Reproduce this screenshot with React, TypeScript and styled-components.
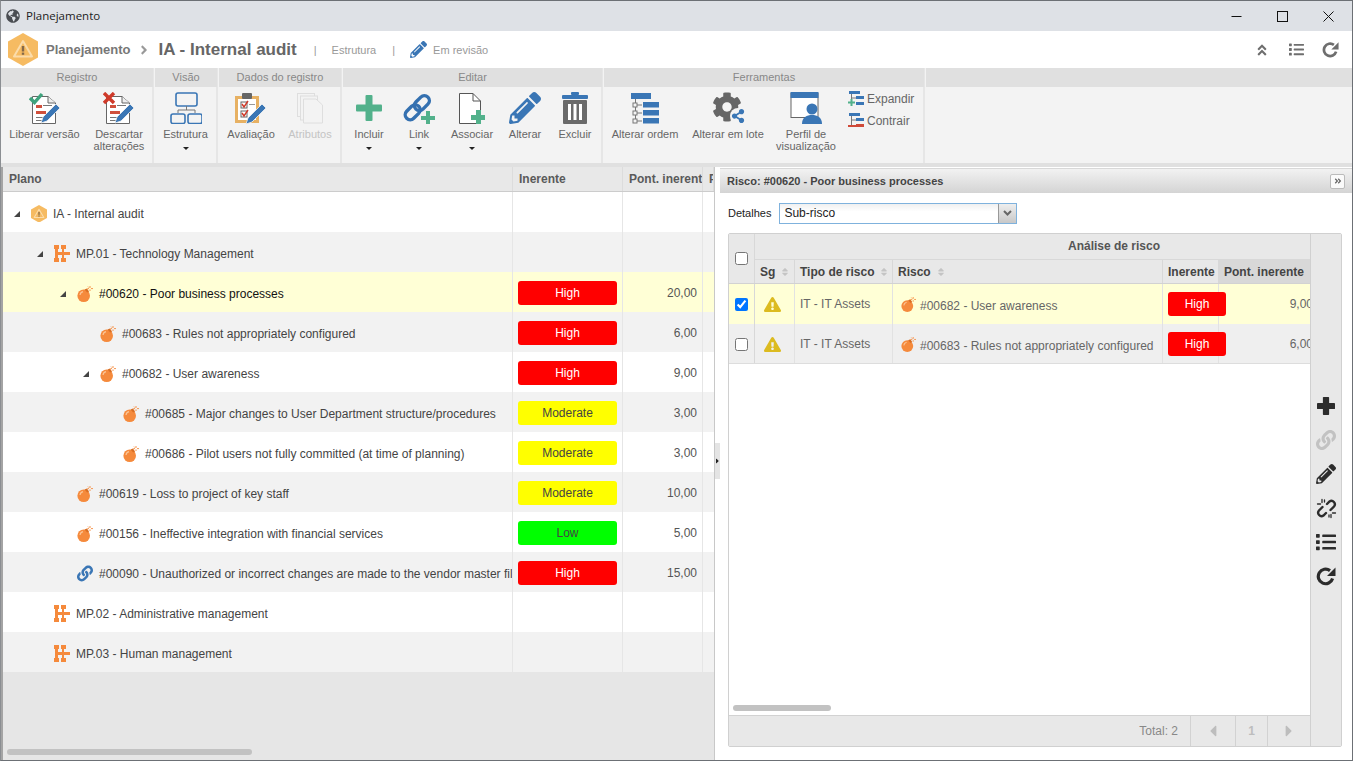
import React, { FC, ReactNode } from "react";
import styled, { createGlobalStyle } from "styled-components";
import {
  FaAngleDoubleUp,
  FaAngleDoubleRight,
  FaAngleRight,
  FaCaretLeft,
  FaCaretRight,
  FaCog,
  FaExclamationTriangle,
  FaGlobeAmericas,
  FaLink,
  FaList,
  FaPencilAlt,
  FaShareAlt,
  FaSort,
} from "react-icons/fa";

const GlobalStyle = createGlobalStyle`
  html, body { margin: 0; padding: 0; background: #fff; }
  body { font-family: "Liberation Sans", Arial, sans-serif; overflow: hidden; }
`;

const Frame = styled.div`
  width: 1351px;
  height: 759px;
  border-top: 1px solid #6c7075;
  border-left: 1px solid #8b8e92;
  border-right: 1px solid #6c7075;
  border-bottom: 1px solid #6c7075;
  display: flex;
  flex-direction: column;
  overflow: hidden;
  background: #fff;
`;

const TitleBar = styled.div`
  height: 30px;
  flex: none;
  background: #dee1e6;
  display: flex;
  align-items: center;
  padding-left: 5px;
  color: #4a4d52;
  font-size: 14px;
`;

const TitleText = styled.span`
  font-family: "Open Sans", sans-serif;
  font-size: 11.5px;
  color: #222;
  margin: 0 0 2px 6px;
`;

const WinControls = styled.div`
  margin: 0 1px 0 auto;
  display: flex;
  height: 100%;
`;

const WinButton = styled.div`
  width: 46px;
  height: 100%;
  display: flex;
  align-items: center;
  justify-content: center;
`;

const Header = styled.div`
  height: 37px;
  flex: none;
  display: flex;
  align-items: center;
  padding-left: 7px;
  background: #fff;
`;

const Crumb = styled.span`
  font-size: 13px;
  font-weight: bold;
  color: #777;
  margin-left: 8px;
`;

const CrumbArrow = styled.span`
  color: #999;
  font-size: 14px;
  display: flex;
  margin: 0 8px 0 6px;
`;

const AuditTitle = styled.span`
  font-size: 17px;
  font-weight: bold;
  color: #666;
`;

const HeaderMeta = styled.span<{ $gap: number }>`
  font-size: 11px;
  color: #999;
  display: flex;
  margin-left: ${({ $gap }) => $gap}px;
`;

const HeaderActions = styled.div`
  margin-left: auto;
  display: flex;
  align-items: center;
  color: #6e6e6e;
  padding-right: 13px;
  gap: 20px;
`;

const RefreshSlot = styled.span`
  display: flex;
  margin-left: -2px;
`;

const Toolbar = styled.div`
  height: 95px;
  flex: none;
  display: flex;
  background: #f3f3f3;
`;

const Group = styled.div<{ $w: number }>`
  width: ${({ $w }) => $w}px;
  flex: none;
  display: flex;
  flex-direction: column;
  border-right: 2px solid #e6e6e6;
  margin-right: 1px;
`;

const RestGroup = styled.div`
  flex: 1;
  height: 19px;
  background: #e0e0e0;
`;

const GroupTitle = styled.div`
  height: 19px;
  margin-right: -1px;
  background: #e0e0e0;
  font-size: 11px;
  line-height: 19px;
  color: #888;
  text-align: center;
`;

const GroupBody = styled.div`
  flex: 1;
  display: flex;
`;

const ToolButton = styled.div<{ $w: number; $off?: boolean }>`
  width: ${({ $w }) => $w}px;
  flex: none;
  display: flex;
  flex-direction: column;
  align-items: center;
  padding-top: 5px;
  font-size: 11px;
  line-height: 12px;
  text-align: center;
  color: ${({ $off }) => ($off ? "#c4c4c4" : "#666")};
`;

const ToolIcon = styled.div`
  height: 32px;
  margin-bottom: 4px;
  display: flex;
  align-items: center;
  justify-content: center;
`;

const Caret = styled.i`
  width: 0;
  height: 0;
  margin-top: 7px;
  border-left: 3px solid transparent;
  border-right: 3px solid transparent;
  border-top: 3px solid #222;
`;

const SideTools = styled.div`
  display: flex;
  flex-direction: column;
  gap: 5px;
  padding: 3px 0 0 6px;
`;

const SideTool = styled.div`
  display: flex;
  align-items: center;
  gap: 3px;
  height: 17px;
  font-size: 12px;
  color: #666;
`;

const Strip = styled.div`
  height: 4px;
  flex: none;
  background: #e0e0e0;
`;

const Main = styled.div`
  flex: 1;
  display: flex;
  min-height: 0;
`;

const LeftPane = styled.div`
  width: 711px;
  flex: none;
  display: flex;
  flex-direction: column;
  background: #e6e6e6;
  border-left: 2px solid #a4a4a4;
`;

const TreeHead = styled.div`
  height: 24px;
  flex: none;
  display: flex;
  background: #e8e8e8;
  border-bottom: 1px solid #ccc;
`;

const HeadCell = styled.div<{ $w: number }>`
  width: ${({ $w }) => $w}px;
  flex: none;
  box-sizing: border-box;
  overflow: hidden;
  white-space: nowrap;
  padding-left: 6px;
  font-size: 12px;
  font-weight: bold;
  line-height: 24px;
  color: #5a5a5a;
  border-right: 1px solid #dcdcdc;
`;

const TreeRow = styled.div<{ $bg: string }>`
  height: 40px;
  flex: none;
  display: flex;
  background: ${({ $bg }) => $bg};
`;

const PlanCell = styled.div<{ $level: number }>`
  width: 510px;
  flex: none;
  box-sizing: border-box;
  padding: 3px 0 0 ${({ $level }) => 8 + $level * 23}px;
  display: flex;
  align-items: center;
  overflow: hidden;
  white-space: nowrap;
  border-right: 1px solid #e6e6e6;
`;

const Toggle = styled.span`
  width: 20px;
  flex: none;
  display: flex;
  padding-left: 2px;
  box-sizing: border-box;
`;

const NodeIcon = styled.span`
  width: 16px;
  flex: none;
  display: flex;
  justify-content: center;
`;

const NodeText = styled.span<{ $active?: boolean }>`
  font-size: 12px;
  margin-left: 6px;
  color: ${({ $active }) => ($active ? "#111" : "#444")};
`;

const LevelCell = styled.div`
  width: 110px;
  flex: none;
  box-sizing: border-box;
  padding: 2px 0 0 5px;
  display: flex;
  align-items: center;
  border-right: 1px solid #e6e6e6;
`;

const ScoreCell = styled.div`
  width: 80px;
  flex: none;
  box-sizing: border-box;
  padding: 1px 5px 0 0;
  text-align: right;
  font-size: 12px;
  color: #555;
  display: flex;
  align-items: center;
  justify-content: flex-end;
  border-right: 1px solid #e6e6e6;
`;

const Badge = styled.div<{ $bg: string; $fg: string; $w: number }>`
  width: ${({ $w }) => $w}px;
  height: 24px;
  flex: none;
  border-radius: 3px;
  background: ${({ $bg }) => $bg};
  color: ${({ $fg }) => $fg};
  font-size: 12px;
  line-height: 24px;
  text-align: center;
  position: relative;
  z-index: 1;
`;

const TreeEnd = styled.div`
  flex: 1;
  display: flex;
  align-items: flex-end;
  padding: 0 0 5px 4px;
`;

const ScrollThumb = styled.div<{ $w: number }>`
  width: ${({ $w }) => $w}px;
  height: 6px;
  border-radius: 3px;
  background: #c2c2c2;
`;

const Splitter = styled.div`
  width: 6px;
  flex: none;
  display: flex;
  align-items: center;
  background: #fff;
  border-left: 1px solid #c8c8c8;
  box-sizing: border-box;
  padding-bottom: 5px;
`;

const SplitHandle = styled.div`
  width: 5px;
  height: 36px;
  background: #e4e4e4;
  display: flex;
  align-items: center;
  font-size: 8px;
  color: #222;
`;

const RightPane = styled.div`
  flex: 1;
  min-width: 0;
  display: flex;
  flex-direction: column;
  padding-top: 1px;
`;

const PaneTitle = styled.div`
  height: 24px;
  flex: none;
  display: flex;
  align-items: center;
  padding: 0 7px 0 7px;
  font-size: 11px;
  font-weight: bold;
  color: #444;
  background: linear-gradient(#f2f2f2, #d4d4d4);
  border-top: 1px solid #d8d8d8;
`;

const CollapseBtn = styled.div`
  margin-left: auto;
  width: 13px;
  height: 13px;
  display: flex;
  align-items: center;
  justify-content: center;
  font-size: 8px;
  color: #666;
  background: #fafafa;
  border: 1px solid #bbb;
  border-radius: 2px;
`;

const DetailRow = styled.div`
  height: 40px;
  flex: none;
  display: flex;
  align-items: center;
  padding-left: 8px;
  font-size: 11px;
  color: #222;
`;

const SelectBox = styled.div`
  width: 238px;
  height: 21px;
  box-sizing: border-box;
  margin-left: 8px;
  border: 1px solid #7fb2dd;
  display: flex;
  align-items: center;
  padding-left: 4px;
  font-size: 12px;
  color: #222;
  background: linear-gradient(#f0f0f0, #fff 40%);
`;

const SelectArrow = styled.div`
  margin-left: auto;
  width: 17px;
  height: 100%;
  background: linear-gradient(#eee, #c8c8c8);
  border-left: 1px solid #999;
  display: flex;
  align-items: center;
  justify-content: center;
`;

const GridBox = styled.div`
  width: 614px;
  height: 514px;
  flex: none;
  margin-left: 8px;
  box-sizing: border-box;
  display: flex;
  border: 1px solid #d0d0d0;
  border-radius: 2px;
`;

const GridMain = styled.div`
  width: 581px;
  flex: none;
  display: flex;
  flex-direction: column;
  overflow: hidden;
`;

const GridHead = styled.div`
  height: 50px;
  flex: none;
  box-sizing: border-box;
  display: flex;
  background: #e8e8e8;
  border-bottom: 1px solid #d2d2d2;
`;

const CheckHead = styled.div`
  width: 26px;
  flex: none;
  box-sizing: border-box;
  display: flex;
  align-items: center;
  justify-content: center;
  border-right: 1px solid #d8d8d8;
`;

const HeadStack = styled.div`
  flex: 1;
  display: flex;
  flex-direction: column;
`;

const GroupHead = styled.div`
  height: 26px;
  flex: none;
  box-sizing: border-box;
  font-size: 12px;
  font-weight: bold;
  color: #555;
  line-height: 25px;
  text-align: center;
  padding-left: 154px;
  border-bottom: 1px solid #d8d8d8;
`;

const ColumnRow = styled.div`
  flex: 1;
  display: flex;
`;

const ColHead = styled.div<{ $w: number; $sorted?: boolean }>`
  width: ${({ $w }) => $w}px;
  flex: none;
  box-sizing: border-box;
  padding-left: 5px;
  display: flex;
  align-items: center;
  gap: 5px;
  font-size: 12px;
  font-weight: bold;
  color: #444;
  white-space: nowrap;
  background: ${({ $sorted }) => ($sorted ? "#d8d8d8" : "transparent")};
  border-right: 1px solid ${({ $sorted }) => ($sorted ? "transparent" : "#d8d8d8")};
  svg { color: #c4c4c4; font-size: 10px; }
`;

const GridRow = styled.div<{ $bg: string }>`
  height: 40px;
  flex: none;
  display: flex;
  background: ${({ $bg }) => $bg};
`;

const GridCell = styled.div<{ $w: number; $right?: boolean }>`
  width: ${({ $w }) => $w}px;
  flex: none;
  box-sizing: border-box;
  padding: ${({ $right }) => ($right ? "0 5px 0 0" : "0 0 0 5px")};
  display: flex;
  align-items: center;
  justify-content: ${({ $right }) => ($right ? "flex-end" : "flex-start")};
  font-size: 12px;
  color: #666;
  white-space: nowrap;
  border-right: 1px solid ${({ $right }) => ($right ? "transparent" : "#e2e2e2")};
`;

const TriangleSlot = styled.span`
  display: flex;
  margin-left: 4px;
  color: #dcbb20;
`;

const BombSlot = styled.span`
  display: flex;
  margin-left: 3px;
`;

const RiskLabel = styled.span`
  margin-left: 4px;
  padding-top: 4px;
`;

const RowCheck = styled.input.attrs({ type: "checkbox" })`
  width: 13px;
  height: 13px;
  margin: 0;
`;

const GridSpace = styled.div`
  flex: 1;
  display: flex;
  align-items: flex-end;
  padding: 0 0 4px 4px;
  background: #fff;
  border-top: 1px solid #ddd;
  margin-top: -1px;
  position: relative;
`;

const GridFoot = styled.div`
  height: 31px;
  flex: none;
  box-sizing: border-box;
  display: flex;
  justify-content: flex-end;
  background: #e8e8e8;
  border-top: 1px solid #d2d2d2;
`;

const FootTotal = styled.div`
  display: flex;
  align-items: center;
  padding-right: 12px;
  font-size: 12px;
  color: #888;
`;

const PageCell = styled.div<{ $w: number }>`
  width: ${({ $w }) => $w}px;
  flex: none;
  box-sizing: border-box;
  display: flex;
  align-items: center;
  justify-content: center;
  font-size: 12px;
  font-weight: bold;
  color: #bdbdbd;
  border-left: 1px solid #d2d2d2;
`;

const GridRail = styled.div`
  flex: 1;
  display: flex;
  flex-direction: column;
  align-items: center;
  padding-top: 162px;
  gap: 14px;
  font-size: 20px;
  background: #e8e8e8;
  border-left: 1px solid #d0d0d0;
  color: #2c2c2c;
`;

const RailIcon = styled.div<{ $off?: boolean }>`
  height: 20px;
  display: flex;
  align-items: center;
  color: ${({ $off }) => ($off ? "#c2c2c2" : "#2c2c2c")};
`;

const orange = "#f58a3c";
const blue = "#3a76b5";
const green = "#52b18b";

const Hexagon: FC<{ size: number }> = ({ size }) => (
  <svg width={size} height={size * 1.1} viewBox="0 0 30 33">
    <polygon points="15,0 30,8.5 30,24.5 15,33 0,24.5 0,8.5" fill="#f6bb62" />
    <path d="M15 8 L24 23.5 H6 Z" fill="none" stroke="#fbdcaa" strokeWidth="2" strokeLinejoin="round" />
    <rect x="13.8" y="13" width="2.4" height="5.5" fill="#85694a" />
    <rect x="13.8" y="19.6" width="2.4" height="2.2" fill="#85694a" />
  </svg>
);

const ProcessIcon = () => (
  <svg width="16" height="17" viewBox="0 0 16 17" fill={orange}>
    <rect x="0" y="0" width="5" height="4" />
    <rect x="0" y="13" width="5" height="4" />
    <rect x="1" y="3" width="3" height="11" />
    <rect x="7" y="0" width="5" height="4" />
    <rect x="7" y="13" width="5" height="4" />
    <rect x="8" y="3" width="2" height="11" />
    <rect x="3" y="7" width="13" height="3" />
  </svg>
);

const BombIcon: FC<{ size?: number }> = ({ size = 16 }) => (
  <svg width={size} height={size} viewBox="0 0 16 16">
    <circle cx="6.7" cy="9.7" r="6.3" fill={orange} />
    <path d="M3 9 A4 4 0 0 1 6 5.6" fill="none" stroke="#fbc596" strokeWidth="1.2" />
    <polygon points="7.5,3.4 10,2.4 12,5.4 10.2,6.4" fill="#d96f24" />
    <path d="M13 0 V2 M13 3.4 V5 M10.4 2.6 H12 M14 2.6 H16 M11 0.6 L12 1.6" stroke={orange} strokeWidth="0.9" />
  </svg>
);

const ToggleMark = () => (
  <svg width="8" height="8" viewBox="0 0 8 8">
    <polygon points="7,1 7,7 1,7" fill="#444" />
  </svg>
);

const DocEdit: FC<{ mark: "check" | "cross" }> = ({ mark }) => (
  <svg width="32" height="32" viewBox="0 0 32 32">
    <path d="M3.5 4.5 H19 L26.5 11 V31.5 H3.5 Z" fill="#fff" stroke="#666" />
    <path d="M19 4.5 V11 H26.5" fill="#eee" stroke="#666" />
    <rect x="7" y="13" width="6" height="3" fill="#d0503c" />
    <rect x="14" y="13" width="9" height="1" fill="#777" />
    <rect x="7" y="19" width="10" height="3" fill="#d0503c" />
    <rect x="7" y="25" width="10" height="1" fill="#777" />
    <rect x="7" y="28" width="8" height="1" fill="#777" />
    <path d="M12 31 L14 25 L27 12 L31 16 L18 29 Z" fill={blue} stroke="#f3f3f3" strokeWidth="0.8" />
    {mark === "check" ? (
      <path d="M1 6 L5.5 10.5 L13 2" fill="none" stroke="#3fa37d" strokeWidth="3.4" />
    ) : (
      <path d="M1 1 L11 11 M11 1 L1 11" fill="none" stroke="#cf3a2a" strokeWidth="3.4" />
    )}
  </svg>
);

const StructureIcon = () => (
  <svg width="32" height="32" viewBox="0 0 32 32" fill="none">
    <rect x="6" y="1" width="21" height="13" rx="2" stroke={blue} strokeWidth="1.6" />
    <path d="M16.5 14 V18 M8 18 H25 M8 18 V21 M25 18 V21" stroke="#777" />
    <rect x="1" y="22" width="14" height="9.5" rx="2" stroke={blue} strokeWidth="1.6" />
    <rect x="18" y="22" width="14" height="9.5" rx="2" stroke={blue} strokeWidth="1.6" />
  </svg>
);

const ClipboardIcon = () => (
  <svg width="32" height="32" viewBox="0 0 32 32">
    <rect x="0" y="4" width="24" height="27" fill="#e7b163" />
    <rect x="3" y="7" width="18" height="21" fill="#fff" />
    <rect x="7" y="1" width="10" height="6" rx="1" fill="#666" />
    <rect x="6" y="10" width="6" height="6" fill="#fff" stroke="#666" />
    <rect x="6" y="19" width="6" height="6" fill="#fff" stroke="#666" />
    <path d="M7 12 L9 15 L13 9 M7 21 L9 24 L13 18" fill="none" stroke="#cf3a2a" strokeWidth="1.5" />
    <rect x="14" y="12" width="6" height="1" fill="#999" />
    <path d="M11 32 L13 26 L27 12 L31 16 L17 30 Z" fill={blue} stroke="#f3f3f3" strokeWidth="0.8" />
  </svg>
);

const PagesIcon = () => (
  <svg width="28" height="32" viewBox="0 0 28 32" fill="#f3f3f3" stroke="#dedede">
    <rect x="1.5" y="1.5" width="17" height="23" />
    <rect x="4.5" y="4" width="17" height="24" />
    <path d="M7.5 7 H20 L26.5 13 V31 H7.5 Z" />
  </svg>
);

const SolidPlus: FC<{ size: number; color: string; bar?: number }> = ({ size, color, bar = 7 }) => (
  <svg width={size} height={size} viewBox="0 0 26 26" fill={color}>
    <rect x={13 - bar / 2} y="0" width={bar} height="26" rx="1" />
    <rect x="0" y={13 - bar / 2} width="26" height={bar} rx="1" />
  </svg>
);

const LinkAddIcon = () => (
  <svg width="32" height="32" viewBox="0 0 32 32">
    <g transform="rotate(-45 15 15)" fill="none" stroke="#3470b0" strokeWidth="3.4">
      <rect x="-1" y="10" width="17" height="10" rx="5" />
      <rect x="12" y="10" width="17" height="10" rx="5" />
    </g>
    <rect x="23" y="19" width="4" height="13" fill={green} />
    <rect x="18" y="24" width="14" height="4" fill={green} />
  </svg>
);

const AssociateIcon = () => (
  <svg width="32" height="32" viewBox="0 0 32 32">
    <path d="M3.5 1.5 H17 L24.5 9 V31.5 H3.5 Z" fill="#fff" stroke="#555" />
    <path d="M17 1.5 V9 H24.5" fill="none" stroke="#555" />
    <rect x="20" y="18" width="5" height="14" fill={green} />
    <rect x="15" y="23" width="14" height="5" fill={green} />
  </svg>
);

const TrashIcon = () => (
  <svg width="28" height="32" viewBox="0 0 28 32">
    <rect x="10" y="0" width="8" height="3" rx="1" fill={blue} />
    <rect x="1" y="3" width="26" height="4" rx="1" fill={blue} />
    <rect x="2" y="8" width="24" height="24" rx="1" fill="#6a6a6a" />
    <rect x="7" y="12" width="3" height="16" fill="#fff" />
    <rect x="12.5" y="12" width="3" height="16" fill="#fff" />
    <rect x="18" y="12" width="3" height="16" fill="#fff" />
  </svg>
);

const OrderIcon = () => (
  <svg width="30" height="32" viewBox="0 0 30 32">
    <rect x="1" y="1" width="20" height="6" fill={blue} />
    <path d="M5.5 7 V29 M5.5 13 H12 M5.5 21 H12 M5.5 29 H12" stroke="#777" fill="none" />
    <rect x="3" y="11" width="4" height="4" fill="#f3f3f3" stroke="#777" />
    <rect x="3" y="19" width="4" height="4" fill="#f3f3f3" stroke="#777" />
    <rect x="3" y="27" width="4" height="4" fill="#f3f3f3" stroke="#777" />
    <rect x="13" y="10" width="16" height="5.5" fill={blue} />
    <rect x="13" y="18" width="16" height="5.5" fill={blue} />
    <rect x="13" y="26" width="16" height="5.5" fill={blue} />
  </svg>
);

const GearWrap = styled.div`
  position: relative;
  width: 32px;
  height: 32px;
  display: flex;
`;

const ShareMark = styled.span`
  position: absolute;
  right: -2px;
  bottom: 0;
  display: flex;
  background: #f3f3f3;
  border-radius: 50%;
  padding: 1px;
`;

const BatchIcon = () => (
  <GearWrap>
    <FaCog size={30} color="#666" />
    <ShareMark>
      <FaShareAlt size={14} color={blue} />
    </ShareMark>
  </GearWrap>
);

const ProfileIcon = () => (
  <svg width="32" height="32" viewBox="0 0 32 32">
    <rect x="1" y="1.5" width="27" height="24" fill="#fff" stroke="#666" />
    <rect x="0.5" y="0" width="28" height="6" fill={blue} />
    <circle cx="22" cy="17" r="5.5" fill={blue} />
    <path d="M12 32 C12 25 17 23 22 23 C27 23 32 25 32 32 Z" fill={blue} />
  </svg>
);

const TreeToolIcon: FC<{ mode: "plus" | "minus" }> = ({ mode }) => (
  <svg width="16" height="15" viewBox="0 0 16 15">
    <rect x="1" y="0" width="11" height="3" fill={blue} />
    <path d="M3.5 3 V12 M3.5 7 H8" stroke="#777" fill="none" />
    <rect x="8" y="5" width="8" height="3" fill={blue} />
    <rect x="8" y="11" width="8" height="3" fill={mode === "plus" ? blue : "#cf4a38"} />
    {mode === "plus" ? (
      <path d="M0 11.5 H7 M3.5 8 V15" stroke={green} strokeWidth="2" />
    ) : (
      <rect x="0" y="12" width="8" height="2" fill="#cf4a38" />
    )}
  </svg>
);

const RefreshIcon: FC<{ size: number }> = ({ size }) => (
  <svg width={size} height={size} viewBox="0 0 20 20" fill="currentColor">
    <path d="M16.6 12.5 A7.3 7.3 0 1 1 14 4.6" fill="none" stroke="currentColor" strokeWidth="3.2" />
    <polygon points="19.5,1.5 19.5,10 11,10" />
  </svg>
);

const UnlinkIcon = () => (
  <svg width="21" height="21" viewBox="0 0 21 21" fill="none" stroke="currentColor" strokeLinecap="round">
    <path d="M11 6 L13.5 3.5 A3.4 3.4 0 0 1 18 8.5 L14.5 12" strokeWidth="2.4" />
    <path d="M10 15 L7.5 17.5 A3.4 3.4 0 0 1 3 12.5 L6.5 9" strokeWidth="2.4" />
    <path d="M6 1.5 V4.5 M1.5 6 H4.5 M15 19.5 V16.5 M19.5 15 H16.5 M8.5 2 V4 M13 19 V17" strokeWidth="1.3" />
  </svg>
);

const LEVELS = {
  High: { bg: "#ff0000", fg: "#fff" },
  Moderate: { bg: "#ffff00", fg: "#444" },
  Low: { bg: "#00ff00", fg: "#444" },
};

type Level = keyof typeof LEVELS;
type NodeKind = "plan" | "process" | "risk" | "link";

interface TreeNode {
  level: number;
  kind: NodeKind;
  text: string;
  open?: boolean;
  rating?: Level;
  score?: string;
  active?: boolean;
}

const TREE: TreeNode[] = [
  { level: 0, kind: "plan", text: "IA - Internal audit", open: true },
  { level: 1, kind: "process", text: "MP.01 - Technology Management", open: true },
  { level: 2, kind: "risk", text: "#00620 - Poor business processes", open: true, rating: "High", score: "20,00", active: true },
  { level: 3, kind: "risk", text: "#00683 - Rules not appropriately configured", rating: "High", score: "6,00" },
  { level: 3, kind: "risk", text: "#00682 - User awareness", open: true, rating: "High", score: "9,00" },
  { level: 4, kind: "risk", text: "#00685 - Major changes to User Department structure/procedures", rating: "Moderate", score: "3,00" },
  { level: 4, kind: "risk", text: "#00686 - Pilot users not fully committed (at time of planning)", rating: "Moderate", score: "3,00" },
  { level: 2, kind: "risk", text: "#00619 - Loss to project of key staff", rating: "Moderate", score: "10,00" },
  { level: 2, kind: "risk", text: "#00156 - Ineffective integration with financial services", rating: "Low", score: "5,00" },
  { level: 2, kind: "link", text: "#00090 - Unauthorized or incorrect changes are made to the vendor master file", rating: "High", score: "15,00" },
  { level: 1, kind: "process", text: "MP.02 - Administrative management" },
  { level: 1, kind: "process", text: "MP.03 - Human management" },
];

const SUB_RISKS = [
  { text: "#00682 - User awareness", score: "9,00", checked: true },
  { text: "#00683 - Rules not appropriately configured", score: "6,00", checked: false },
];

const nodeIcon = (kind: NodeKind): ReactNode => {
  if (kind === "plan") return <Hexagon size={16} />;
  if (kind === "process") return <ProcessIcon />;
  if (kind === "link") return <FaLink size={17} color={blue} />;
  return <BombIcon />;
};

const Tool: FC<{ w: number; icon: ReactNode; label: ReactNode; caret?: boolean; off?: boolean }> = ({
  w,
  icon,
  label,
  caret,
  off,
}) => (
  <ToolButton $w={w} $off={off}>
    <ToolIcon>{icon}</ToolIcon>
    <span>{label}</span>
    {caret && <Caret />}
  </ToolButton>
);

export default function App() {
  return (
    <>
      <GlobalStyle />
      <Frame>
        <TitleBar>
          <FaGlobeAmericas />
          <TitleText>Planejamento</TitleText>
          <WinControls>
            <WinButton>
              <svg width="11" height="11" viewBox="0 0 11 11">
                <path d="M0.5 5.5 H10.5" stroke="#111" />
              </svg>
            </WinButton>
            <WinButton>
              <svg width="11" height="11" viewBox="0 0 11 11">
                <rect x="0.5" y="0.5" width="10" height="10" fill="none" stroke="#111" />
              </svg>
            </WinButton>
            <WinButton>
              <svg width="11" height="11" viewBox="0 0 11 11">
                <path d="M0.5 0.5 L10.5 10.5 M10.5 0.5 L0.5 10.5" stroke="#111" />
              </svg>
            </WinButton>
          </WinControls>
        </TitleBar>
        <Header>
          <Hexagon size={30} />
          <Crumb>Planejamento</Crumb>
          <CrumbArrow>
            <FaAngleRight />
          </CrumbArrow>
          <AuditTitle>IA - Internal audit</AuditTitle>
          <HeaderMeta $gap={17}>|</HeaderMeta>
          <HeaderMeta $gap={15}>Estrutura</HeaderMeta>
          <HeaderMeta $gap={16}>|</HeaderMeta>
          <HeaderMeta $gap={15}>
            <FaPencilAlt size={17} color={blue} />
          </HeaderMeta>
          <HeaderMeta $gap={6}>Em revisão</HeaderMeta>
          <HeaderActions>
            <FaAngleDoubleUp size={14} />
            <FaList size={15} />
            <RefreshSlot>
              <RefreshIcon size={17} />
            </RefreshSlot>
          </HeaderActions>
        </Header>
        <Toolbar>
          <Group $w={151}>
            <GroupTitle>Registro</GroupTitle>
            <GroupBody>
              <Tool w={87} icon={<DocEdit mark="check" />} label="Liberar versão" />
              <Tool w={62} icon={<DocEdit mark="cross" />} label={<>Descartar<br />alterações</>} />
            </GroupBody>
          </Group>
          <Group $w={61}>
            <GroupTitle>Visão</GroupTitle>
            <GroupBody>
              <Tool w={61} icon={<StructureIcon />} label="Estrutura" caret />
            </GroupBody>
          </Group>
          <Group $w={121}>
            <GroupTitle>Dados do registro</GroupTitle>
            <GroupBody>
              <Tool w={64} icon={<ClipboardIcon />} label="Avaliação" />
              <Tool w={54} icon={<PagesIcon />} label="Atributos" off />
            </GroupBody>
          </Group>
          <Group $w={258}>
            <GroupTitle>Editar</GroupTitle>
            <GroupBody>
              <Tool w={52} icon={<SolidPlus size={26} color={green} />} label="Incluir" caret />
              <Tool w={48} icon={<LinkAddIcon />} label="Link" caret />
              <Tool w={58} icon={<AssociateIcon />} label="Associar" caret />
              <Tool w={48} icon={<FaPencilAlt size={32} color={blue} />} label="Alterar" />
              <Tool w={52} icon={<TrashIcon />} label="Excluir" />
            </GroupBody>
          </Group>
          <Group $w={319}>
            <GroupTitle>Ferramentas</GroupTitle>
            <GroupBody>
              <Tool w={82} icon={<OrderIcon />} label="Alterar ordem" />
              <Tool w={84} icon={<BatchIcon />} label="Alterar em lote" />
              <Tool w={72} icon={<ProfileIcon />} label={<>Perfil de<br />visualização</>} />
              <SideTools>
                <SideTool>
                  <TreeToolIcon mode="plus" />
                  Expandir
                </SideTool>
                <SideTool>
                  <TreeToolIcon mode="minus" />
                  Contrair
                </SideTool>
              </SideTools>
            </GroupBody>
          </Group>
          <RestGroup />
        </Toolbar>
        <Strip />
        <Main>
          <LeftPane>
            <TreeHead>
              <HeadCell $w={510}>Plano</HeadCell>
              <HeadCell $w={110}>Inerente</HeadCell>
              <HeadCell $w={80}>Pont. inerente</HeadCell>
              <HeadCell $w={11}>P</HeadCell>
            </TreeHead>
            {TREE.map((node, i) => (
              <TreeRow key={node.text} $bg={node.active ? "#ffffd6" : i % 2 ? "#f2f2f2" : "#fff"}>
                <PlanCell $level={node.level}>
                  <Toggle>{node.open && <ToggleMark />}</Toggle>
                  <NodeIcon>{nodeIcon(node.kind)}</NodeIcon>
                  <NodeText $active={node.active}>{node.text}</NodeText>
                </PlanCell>
                <LevelCell>
                  {node.rating && (
                    <Badge $w={99} $bg={LEVELS[node.rating].bg} $fg={LEVELS[node.rating].fg}>
                      {node.rating}
                    </Badge>
                  )}
                </LevelCell>
                <ScoreCell>{node.score}</ScoreCell>
              </TreeRow>
            ))}
            <TreeEnd>
              <ScrollThumb $w={245} />
            </TreeEnd>
          </LeftPane>
          <Splitter>
            <SplitHandle>
              <FaCaretRight />
            </SplitHandle>
          </Splitter>
          <RightPane>
            <PaneTitle>
              Risco: #00620 - Poor business processes
              <CollapseBtn>
                <FaAngleDoubleRight />
              </CollapseBtn>
            </PaneTitle>
            <DetailRow>
              Detalhes
              <SelectBox>
                Sub-risco
                <SelectArrow>
                  <svg width="9" height="6" viewBox="0 0 9 6">
                    <path d="M1 1 L4.5 4.5 L8 1" fill="none" stroke="#666" strokeWidth="2" />
                  </svg>
                </SelectArrow>
              </SelectBox>
            </DetailRow>
            <GridBox>
              <GridMain>
                <GridHead>
                  <CheckHead>
                    <RowCheck readOnly />
                  </CheckHead>
                  <HeadStack>
                    <GroupHead>Análise de risco</GroupHead>
                    <ColumnRow>
                      <ColHead $w={40}>Sg <FaSort /></ColHead>
                      <ColHead $w={98}>Tipo de risco <FaSort /></ColHead>
                      <ColHead $w={270}>Risco <FaSort /></ColHead>
                      <ColHead $w={56}>Inerente</ColHead>
                      <ColHead $w={100} $sorted>Pont. inerente</ColHead>
                    </ColumnRow>
                  </HeadStack>
                </GridHead>
                {SUB_RISKS.map((risk) => (
                  <GridRow key={risk.text} $bg={risk.checked ? "#ffffd6" : "#efefef"}>
                    <CheckHead>
                      <RowCheck checked={risk.checked} readOnly />
                    </CheckHead>
                    <GridCell $w={40}>
                      <TriangleSlot>
                        <FaExclamationTriangle size={17} />
                      </TriangleSlot>
                    </GridCell>
                    <GridCell $w={98}>IT - IT Assets</GridCell>
                    <GridCell $w={270}>
                      <BombSlot>
                        <BombIcon size={15} />
                      </BombSlot>
                      <RiskLabel>{risk.text}</RiskLabel>
                    </GridCell>
                    <GridCell $w={56}>
                      <Badge $w={58} $bg={LEVELS.High.bg} $fg={LEVELS.High.fg}>High</Badge>
                    </GridCell>
                    <GridCell $w={100} $right>{risk.score}</GridCell>
                  </GridRow>
                ))}
                <GridSpace>
                  <ScrollThumb $w={98} />
                </GridSpace>
                <GridFoot>
                  <FootTotal>Total: 2</FootTotal>
                  <PageCell $w={45}><FaCaretLeft size={18} /></PageCell>
                  <PageCell $w={32}>1</PageCell>
                  <PageCell $w={43}><FaCaretRight size={18} /></PageCell>
                </GridFoot>
              </GridMain>
              <GridRail>
                <RailIcon><SolidPlus size={18} color="currentColor" bar={9} /></RailIcon>
                <RailIcon $off><FaLink /></RailIcon>
                <RailIcon><FaPencilAlt /></RailIcon>
                <RailIcon><UnlinkIcon /></RailIcon>
                <RailIcon><FaList /></RailIcon>
                <RailIcon><RefreshIcon size={20} /></RailIcon>
              </GridRail>
            </GridBox>
          </RightPane>
        </Main>
      </Frame>
    </>
  );
}
